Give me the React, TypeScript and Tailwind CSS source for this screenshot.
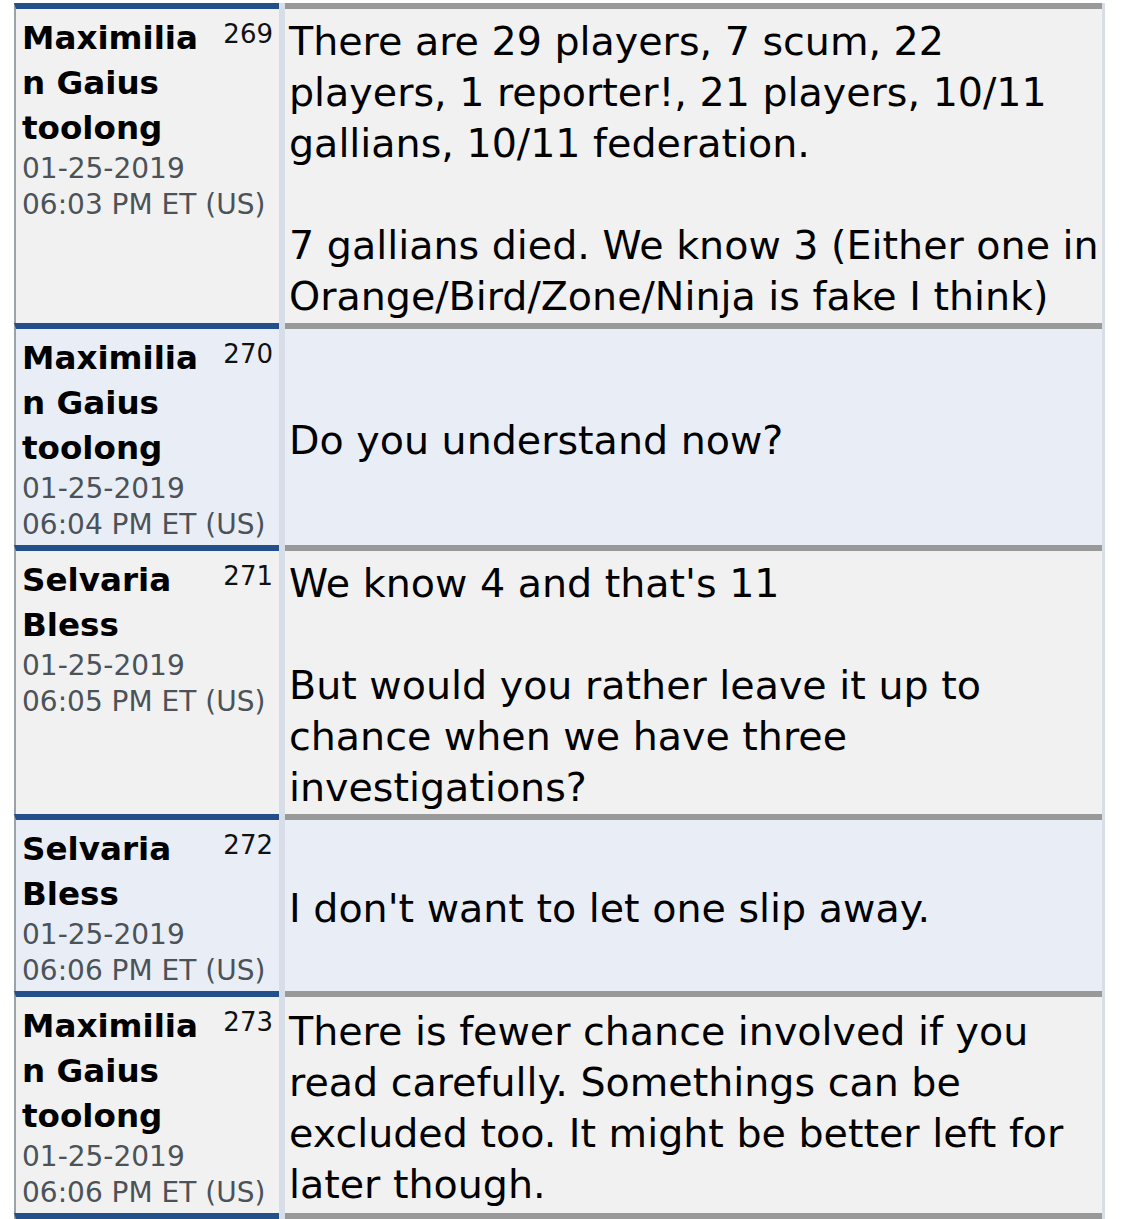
import React from "react";

type Post = {
  name: string;
  num: number;
  date: string;
  time: string;
  alt: boolean;
  paras: string[];
};

const posts: Post[] = [
  {
    name: "Maximilian Gaius toolong",
    num: 269,
    date: "01-25-2019",
    time: "06:03 PM ET (US)",
    alt: false,
    paras: [
      "There are 29 players, 7 scum, 22 players, 1 reporter!, 21 players, 10/11 gallians, 10/11 federation.",
      "7 gallians died. We know 3 (Either one in Orange/Bird/Zone/Ninja is fake I think)",
    ],
  },
  {
    name: "Maximilian Gaius toolong",
    num: 270,
    date: "01-25-2019",
    time: "06:04 PM ET (US)",
    alt: true,
    paras: ["Do you understand now?"],
  },
  {
    name: "Selvaria Bless",
    num: 271,
    date: "01-25-2019",
    time: "06:05 PM ET (US)",
    alt: false,
    paras: [
      "We know 4 and that's 11",
      "But would you rather leave it up to chance when we have three investigations?",
    ],
  },
  {
    name: "Selvaria Bless",
    num: 272,
    date: "01-25-2019",
    time: "06:06 PM ET (US)",
    alt: true,
    paras: ["I don't want to let one slip away."],
  },
  {
    name: "Maximilian Gaius toolong",
    num: 273,
    date: "01-25-2019",
    time: "06:06 PM ET (US)",
    alt: false,
    paras: [
      "There is fewer chance involved if you read carefully. Somethings can be excluded too. It might be better left for later though.",
    ],
  },
];

function Row({ p }: { p: Post }) {
  const bg = p.alt ? "bg-[#e9eef6]" : "bg-[#f1f1f1]";
  return (
    <div className="flex gap-[6px]">
      <div
        className={`w-[265px] shrink-0 border-t-[6px] border-l-2 border-t-[#23508b] border-l-[#9ca2a8] ${bg} pl-[6px] pr-[6px] pt-[7px] pb-[2px]`}
      >
        <div className="float-right ml-[10px] text-[26px] leading-[36px] text-[#111]">
          {p.num}
        </div>
        <div className="text-[32.6px] leading-[45px] font-bold text-black [overflow-wrap:anywhere]">
          {p.name}
        </div>
        <div className="text-[28px] leading-[36px] text-[#4b5258]">
          <div>{p.date}</div>
          <div>{p.time}</div>
        </div>
      </div>
      <div
        className={`flex-1 border-t-[6px] border-t-[#999999] ${bg} pl-[4px] pr-0 pt-[7px] pb-[1px] flex flex-col justify-center`}
      >
        <div className="text-[39.6px] leading-[51px] text-black">
          {p.paras.map((t, i) => (
            <React.Fragment key={i}>
              {i > 0 && (
                <>
                  <br />
                  <br />
                </>
              )}
              {t}
            </React.Fragment>
          ))}
        </div>
      </div>
    </div>
  );
}

export default function App() {
  return (
    <div
      className="min-h-[1219px] bg-white pt-[3px] pl-[14px]"
      style={{ fontFamily: '"DejaVu Sans", Verdana, sans-serif' }}
    >
      <div className="w-[1091px] bg-[#d8dee7] pr-[3px]">
        {posts.map((p) => (
          <Row key={p.num} p={p} />
        ))}
        <div className="flex gap-[6px] h-[40px]">
          <div className="w-[265px] shrink-0 border-t-[6px] border-l-2 border-t-[#23508b] border-l-[#9ca2a8] bg-[#e9eef6]" />
          <div className="flex-1 border-t-[6px] border-t-[#999999] bg-[#e9eef6]" />
        </div>
      </div>
    </div>
  );
}
